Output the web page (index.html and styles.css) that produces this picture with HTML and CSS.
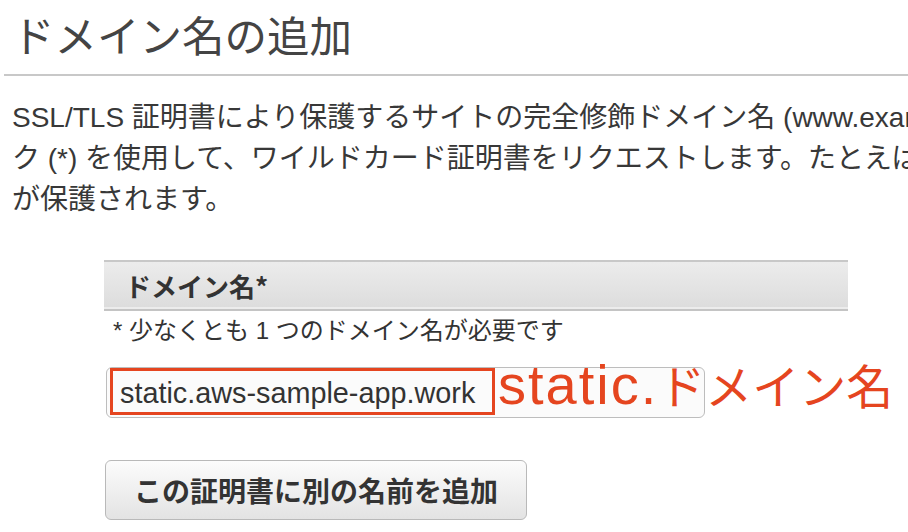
FILE: index.html
```html
<!DOCTYPE html>
<html lang="ja">
<head>
<meta charset="utf-8">
<title>ドメイン名の追加</title>
<link rel="stylesheet" href="styles.css">
</head>
<body>
<div class="page">
  <h1 class="title">ドメイン名の追加</h1>
  <div class="rule"></div>
  <p class="intro">
    <span class="line">SSL/TLS 証明書により保護するサイトの完全修飾ドメイン名 (www.example.com など) を入力します。アスタリス</span>
    <span class="line">ク (*) を使用して、ワイルドカード証明書をリクエストします。たとえば、*.example.com を使用すると、www.example.com</span>
    <span class="line">が保護されます。</span>
  </p>
  <section class="panel">
    <div class="panel-head">ドメイン名*</div>
    <p class="note">* 少なくとも 1 つのドメイン名が必要です</p>
    <div class="field-row">
      <div class="input">
        <span class="highlight">static.aws-sample-app.work</span>
      </div>
      <span class="annot"><span class="annot-latin">static.</span>ドメイン名</span>
    </div>
    <button class="add-btn" type="button">この証明書に別の名前を追加</button>
  </section>
</div>
</body>
</html>
```
FILE: styles.css
```css
html, body {
  margin: 0;
  padding: 0;
  background: #ffffff;
}

.page {
  width: 908px;
  height: 532px;
  overflow: hidden;
  font-family: "Liberation Sans", "Noto Sans CJK JP", sans-serif;
  color: #333333;
}

.title {
  margin: 0;
  padding: 9px 0 0 12px;
  font-family: "Noto Sans CJK JP", sans-serif;
  font-size: 42.5px;
  line-height: 50px;
  font-weight: 400;
  color: #444444;
}

.rule {
  margin: 15px 0 0 4px;
  height: 2px;
  background: #c8c8c8;
}

.intro {
  margin: 21px 0 0 0;
  padding-left: 12px;
  font-size: 28px;
  line-height: 41px;
  color: #383838;
  white-space: nowrap;
}

.line {
  display: block;
}

.panel {
  margin: 40px 0 0 104px;
  width: 744px;
}

.panel-head {
  height: 47px;
  padding-left: 21px;
  border-top: 2px solid #c8c8c8;
  border-bottom: 2px solid #c4c4c4;
  box-shadow: inset 0 -2px 0 #ececec;
  background: linear-gradient(#ececec, #dcdcdc);
  font-family: "Noto Sans CJK JP", sans-serif;
  font-size: 26px;
  font-weight: 700;
  line-height: 47px;
  color: #333333;
}

.note {
  margin: 5px 0 0 0;
  padding-left: 9px;
  font-size: 24px;
  line-height: 30px;
  color: #333333;
}

.field-row {
  position: relative;
  margin-top: 21px;
  height: 51px;
}

.input {
  box-sizing: border-box;
  margin-left: 2px;
  width: 599px;
  height: 51px;
  padding: 0 0 0 3px;
  border: 1px solid #bdbdbd;
  border-radius: 6px;
  background: #fbfbfb;
}

.highlight {
  display: block;
  box-sizing: border-box;
  width: 385px;
  height: 47px;
  padding: 3px 0 0 7px;
  border: 3px solid #e5451f;
  font-size: 28.8px;
  line-height: 38px;
  color: #333333;
  background: #fbfbfb;
}

.annot {
  position: absolute;
  left: 394px;
  top: -6px;
  font-family: "Noto Sans CJK JP", sans-serif;
  font-size: 47px;
  line-height: 46px;
  color: #e5451f;
  white-space: nowrap;
}

.annot-latin {
  font-family: "Liberation Sans", sans-serif;
  font-size: 56px;
  letter-spacing: 2px;
}

.add-btn {
  display: block;
  box-sizing: border-box;
  margin: 42px 0 0 1px;
  width: 422px;
  height: 60px;
  padding: 0;
  border: 1px solid #b9b9b9;
  border-radius: 6px;
  background: linear-gradient(#fcfcfc, #e3e3e3);
  font-family: "Noto Sans CJK JP", sans-serif;
  font-size: 28px;
  font-weight: 700;
  line-height: 58px;
  color: #333333;
  text-align: center;
}
```
